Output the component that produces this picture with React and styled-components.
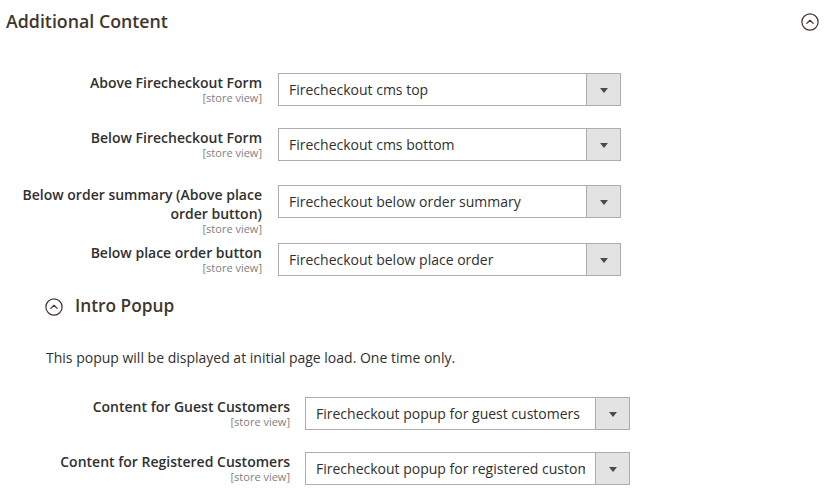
import React from "react";
import styled, { createGlobalStyle } from "styled-components";

const Global = createGlobalStyle`
  html, body { margin: 0; padding: 0; background: #fff; }
  body { font-family: "Open Sans", "Liberation Sans", sans-serif; color: #303030; }
  * { box-sizing: border-box; }
`;

const Page = styled.div`
  width: 826px;
  height: 498px;
  overflow: hidden;
  background: #fff;
`;

const SectionHeader = styled.div`
  display: flex;
  align-items: center;
  justify-content: space-between;
  padding: 7px 7px 0 6px;
`;

const SectionTitle = styled.h2`
  margin: 0;
  font-size: 17.8px;
  line-height: 28px;
  font-weight: 600;
  color: #41362f;
`;

const Fieldset = styled.div`
  margin-top: 38px;
  padding-left: 6px;
`;

const Row = styled.div`
  display: grid;
  grid-template-columns: 256px ${(p) => p.$selectWidth}px;
  column-gap: ${(p) => p.$gap}px;
  align-items: start;
  height: ${(p) => p.$h}px;
`;

const LabelBlock = styled.div`
  text-align: right;
`;

const LabelText = styled.div`
  font-size: 14px;
  line-height: 19px;
  font-weight: 600;
  color: #303030;
`;

const Scope = styled.div`
  font-size: 11px;
  line-height: 12px;
  color: #808080;
`;

const Select = styled.div`
  display: flex;
  height: 33px;
  border: 1px solid #adadad;
  background: #fff;
`;

const SelectValue = styled.div`
  flex: 1;
  min-width: 0;
  padding: 0 10px;
`;

const ValueText = styled.span`
  display: block;
  font-size: 14px;
  line-height: 31px;
  color: #303030;
  white-space: nowrap;
  overflow: hidden;
`;

const SelectButton = styled.div`
  width: 34px;
  flex: none;
  border-left: 1px solid #adadad;
  background: #e3e3e3;
  display: flex;
  align-items: center;
  justify-content: center;
`;

const Arrow = styled.span`
  width: 0;
  height: 0;
  border-left: 4px solid transparent;
  border-right: 4px solid transparent;
  border-top: 5px solid #514943;
  margin-top: 1px;
`;

const Group = styled.div`
  margin-left: 28px;
`;

const GroupHeader = styled.div`
  display: flex;
  align-items: center;
  gap: 12px;
  padding-left: 11px;
  margin-top: ${(p) => p.$top}px;
`;

const GroupTitle = styled.h3`
  margin: 0;
  font-size: 17.3px;
  line-height: 24px;
  font-weight: 600;
  color: #41362f;
`;

const Description = styled.p`
  margin: 30px 0 29px 0;
  padding-left: 12px;
  font-size: 14px;
  line-height: 20px;
  color: #303030;
`;

const IconWrap = styled.span`
  display: inline-flex;
  width: 18px;
  height: 18px;
  margin-top: ${(p) => p.$dy || 0}px;
`;

const CollapseIcon = ({ dy }) => (
  <IconWrap $dy={dy}>
    <svg width="18" height="18" viewBox="0 0 18 18" fill="none">
      <circle cx="9" cy="9" r="8.1" stroke="#41362f" strokeWidth="1.2" />
      <path d="M5.8 10.4 L9 7.3 L12.2 10.4" stroke="#41362f" strokeWidth="1.2" strokeLinecap="round" strokeLinejoin="round" />
    </svg>
  </IconWrap>
);

const Field = ({ label, value, h = 55, width = 343, gap = 16 }) => (
  <Row $h={h} $selectWidth={width} $gap={gap}>
    <LabelBlock>
      <LabelText>{label}</LabelText>
      <Scope>[store view]</Scope>
    </LabelBlock>
    <Select>
      <SelectValue>
        <ValueText>{value}</ValueText>
      </SelectValue>
      <SelectButton>
        <Arrow />
      </SelectButton>
    </Select>
  </Row>
);

export default function App() {
  return (
    <Page>
      <Global />
      <SectionHeader>
        <SectionTitle>Additional Content</SectionTitle>
        <CollapseIcon dy={1} />
      </SectionHeader>
      <Fieldset>
        <Field label="Above Firecheckout Form" value="Firecheckout cms top" h={55} />
        <Field label="Below Firecheckout Form" value="Firecheckout cms bottom" h={57} />
        <Field
          label="Below order summary (Above place order button)"
          value="Firecheckout below order summary"
          h={58}
        />
        <Field label="Below place order button" value="Firecheckout below place order" h={33} />
        <Group>
          <GroupHeader $top={18}>
            <CollapseIcon dy={2} />
            <GroupTitle>Intro Popup</GroupTitle>
          </GroupHeader>
          <Description>This popup will be displayed at initial page load. One time only.</Description>
          <Field
            label="Content for Guest Customers"
            value="Firecheckout popup for guest customers"
            width={325}
            gap={15}
          />
          <Field
            label="Content for Registered Customers"
            value="Firecheckout popup for registered customers"
            width={325}
            gap={15}
          />
        </Group>
      </Fieldset>
    </Page>
  );
}
